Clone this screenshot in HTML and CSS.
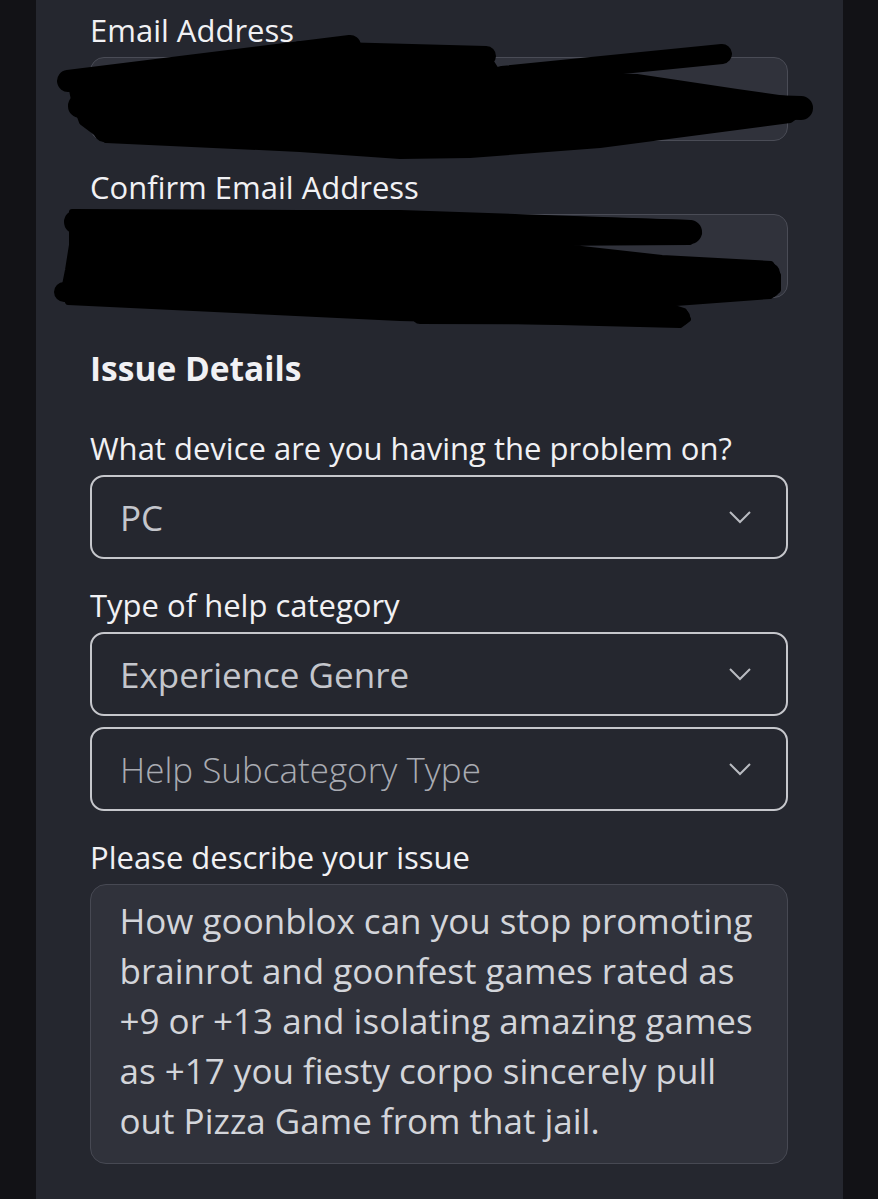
FILE: index.html
```html
<!DOCTYPE html>
<html lang="en">
<head>
  <meta charset="UTF-8" />
  <meta name="viewport" content="width=device-width, initial-scale=1.0" />
  <title>Support Form</title>
  <link rel="stylesheet" href="styles.css">
</head>
<body>
  <div class="page">
    <form class="panel">
      <div class="field">
        <label class="label">Email Address</label>
        <div class="input"></div>
      </div>
      <div class="field">
        <label class="label">Confirm Email Address</label>
        <div class="input"></div>
      </div>

      <h2 class="section-title">Issue Details</h2>

      <div class="field">
        <label class="label">What device are you having the problem on?</label>
        <div class="select">
          <span class="select-value">PC</span>
          <svg class="chevron" width="24" height="14" viewBox="0 0 24 14"><polyline points="2,2 12,12 22,2" /></svg>
        </div>
      </div>

      <div class="field">
        <label class="label">Type of help category</label>
        <div class="select-group">
          <div class="select">
            <span class="select-value">Experience Genre</span>
            <svg class="chevron" width="24" height="14" viewBox="0 0 24 14"><polyline points="2,2 12,12 22,2" /></svg>
          </div>
          <div class="select">
            <span class="select-value placeholder">Help Subcategory Type</span>
            <svg class="chevron" width="24" height="14" viewBox="0 0 24 14"><polyline points="2,2 12,12 22,2" /></svg>
          </div>
        </div>
      </div>

      <div class="field">
        <label class="label">Please describe your issue</label>
        <div class="textarea">How goonblox can you stop promoting<br>brainrot and goonfest games rated as<br>+9 or +13 and isolating amazing games<br>as +17 you fiesty corpo sincerely pull<br>out Pizza Game from that jail.</div>
      </div>
    </form>

    <!-- marker scribbles over the email fields -->
    <svg class="redact" width="878" height="340" viewBox="0 0 878 340">
      <path class="blot" d="M70 80 L352 46 L486 54 L498 73 L637 77 L737 92 L800 101 L804 110 L790 120 L600 145 L470 155 L400 156 L300 149 L106 140 L82 122 L74 100 Z" />
      <path class="mark" stroke-width="22" d="M68 81 L350 46" />
      <path class="mark" stroke-width="20" d="M300 51 L486 56" />
      <path class="mark" stroke-width="20" d="M502 76 L722 54" />
      <path class="mark" stroke-width="24" d="M80 106 L560 100 L801 108" />
      <path class="mark" stroke-width="20" d="M104 132 L300 140" />

      <path class="blot" d="M72 212 L300 213 L520 218 L690 223 L699 233 L690 242 L528 243 L662 258 L771 264 L778 275 L778 290 L770 296 L662 304 L684 311 L688 319 L680 325 L400 318 L68 302 L64 290 L68 270 L72 245 Z" />
      <path class="mark" stroke-width="24" d="M76 222 L400 222 L690 232" />
      <path class="mark" stroke-width="20" d="M90 270 L770 273" />
      <path class="mark" stroke-width="20" d="M64 292 L770 288" />
      <path class="mark" stroke-width="16" d="M420 316 L682 317" />
    </svg>
  </div>
</body>
</html>
```

FILE: styles.css
```css
:root {
  --bg: #121216;
  --panel: #25272f;
  --field: #30323b;
  --field-border: #4a4c56;
  --select-border: #c6c7cc;
  --text: #f1f1f4;
  --value: #c4c6cc;
  --muted: #a9abb2;
}

* {
  box-sizing: border-box;
}

body {
  margin: 0;
  background-color: var(--bg);
  font-family: 'Open Sans', Lato, Arial, sans-serif;
  color: var(--text);
}

.page {
  position: relative;
  min-height: 1199px;
}

.panel {
  margin-left: 36px;
  width: 807px;
  min-height: 1199px;
  padding: 12px 55px 0 54px;
  background-color: var(--panel);
}

.field {
  margin-bottom: 28px;
}

.label {
  display: block;
  font-size: 31px;
  line-height: 36px;
  margin-bottom: 9px;
}

.input {
  height: 84px;
  border: 1.5px solid var(--field-border);
  border-radius: 14px;
  background-color: var(--field);
}

.section-title {
  margin: 50px 0 42px;
  font-size: 33.5px;
  line-height: 40px;
  font-weight: 700;
}

.select-group {
  display: flex;
  flex-direction: column;
  gap: 11px;
}

.select {
  height: 84px;
  display: flex;
  align-items: center;
  justify-content: space-between;
  padding: 0 34px 0 28px;
  border: 2px solid var(--select-border);
  border-radius: 14px;
}

.select-value {
  font-size: 35px;
  color: var(--value);
}

.select-value.placeholder {
  font-weight: 300;
  color: var(--muted);
}

.chevron polyline {
  fill: none;
  stroke: #b9bbc1;
  stroke-width: 2;
}

.textarea {
  height: 280px;
  padding: 11px 10px 0 28.5px;
  border: 1.5px solid #474953;
  border-radius: 16px;
  background-color: var(--field);
  font-size: 35px;
  line-height: 50px;
  color: #d3d5da;
  white-space: nowrap;
}

.redact {
  position: absolute;
  top: 0;
  left: 0;
  pointer-events: none;
}

.redact .blot {
  fill: #000;
  stroke: #000;
  stroke-width: 6;
  stroke-linejoin: round;
}

.redact .mark {
  fill: none;
  stroke: #000;
  stroke-linecap: round;
  stroke-linejoin: round;
}
```
